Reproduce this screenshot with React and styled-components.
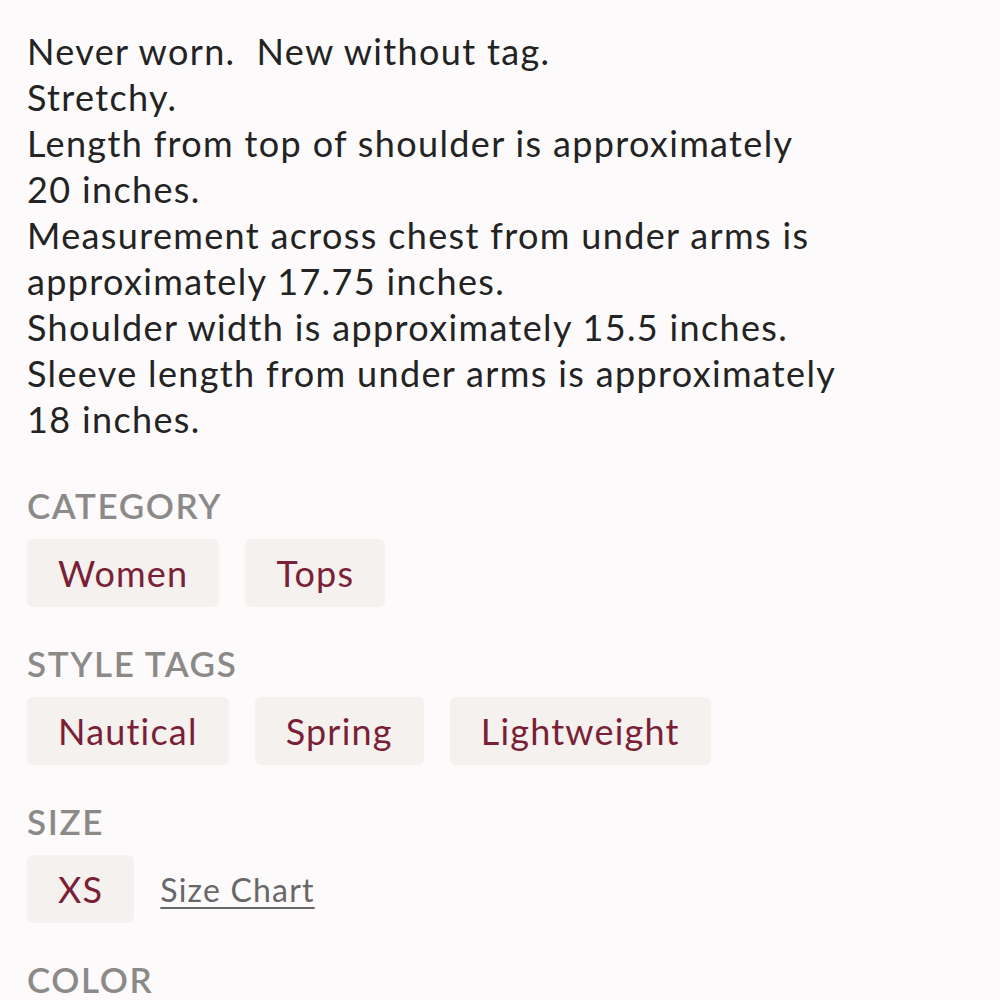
import React from "react";
import styled, { createGlobalStyle } from "styled-components";

const GlobalStyle = createGlobalStyle`
    body {
        margin: 0;
        background: #fcfafa;
        font-family: "Lato", "Liberation Sans", sans-serif;
    }
`;

const lines = [
    "Never worn.\u00a0\u00a0New without tag.",
    "Stretchy.",
    "Length from top of shoulder is approximately",
    "20 inches.",
    "Measurement across chest from under arms is",
    "approximately 17.75 inches.",
    "Shoulder width is approximately 15.5 inches.",
    "Sleeve length from under arms is approximately",
    "18 inches.",
];

export default function App() {
    return (
        <>
            <GlobalStyle />
            <Page>
                <Description>
                    {lines.map((l, i) => (
                        <Line key={i}>{l}</Line>
                    ))}
                </Description>

                <Section>
                    <Label>CATEGORY</Label>
                    <ChipRow>
                        <Chip>Women</Chip>
                        <Chip>Tops</Chip>
                    </ChipRow>
                </Section>

                <Section>
                    <Label>STYLE TAGS</Label>
                    <ChipRow>
                        <Chip>Nautical</Chip>
                        <Chip>Spring</Chip>
                        <Chip>Lightweight</Chip>
                    </ChipRow>
                </Section>

                <Section>
                    <Label>SIZE</Label>
                    <ChipRow>
                        <Chip>XS</Chip>
                        <SizeLink href="#">Size Chart</SizeLink>
                    </ChipRow>
                </Section>

                <Section>
                    <Label>COLOR</Label>
                </Section>
            </Page>
        </>
    );
}

const Page = styled.main`
    padding: 28px 27px 0;
    display: flex;
    flex-direction: column;
`;
const Description = styled.div`
    color: #232323;
    font-size: 36px;
    line-height: 46px;
    letter-spacing: 1.35px;
    margin-bottom: 43px;
`;
const Line = styled.div`
    white-space: pre;
`;
const Section = styled.section`
    margin-bottom: 36px;
`;
const Label = styled.h4`
    margin: 0 0 14px;
    font-size: 35px;
    line-height: 40px;
    font-weight: 600;
    color: #8c8a89;
    letter-spacing: 1.6px;
`;
const ChipRow = styled.div`
    display: flex;
    align-items: center;
    gap: 26px;
`;
const Chip = styled.span`
    display: inline-flex;
    align-items: center;
    height: 68px;
    padding: 0 31px;
    background: #f4f1ef;
    border-radius: 6px;
    color: #7a1f36;
    font-size: 36px;
    letter-spacing: 1.2px;
`;
const SizeLink = styled.a`
    color: #686868;
    font-size: 32px;
    letter-spacing: 1.2px;
    text-decoration: underline;
    text-decoration-thickness: 2px;
    text-underline-offset: 5px;
`;
